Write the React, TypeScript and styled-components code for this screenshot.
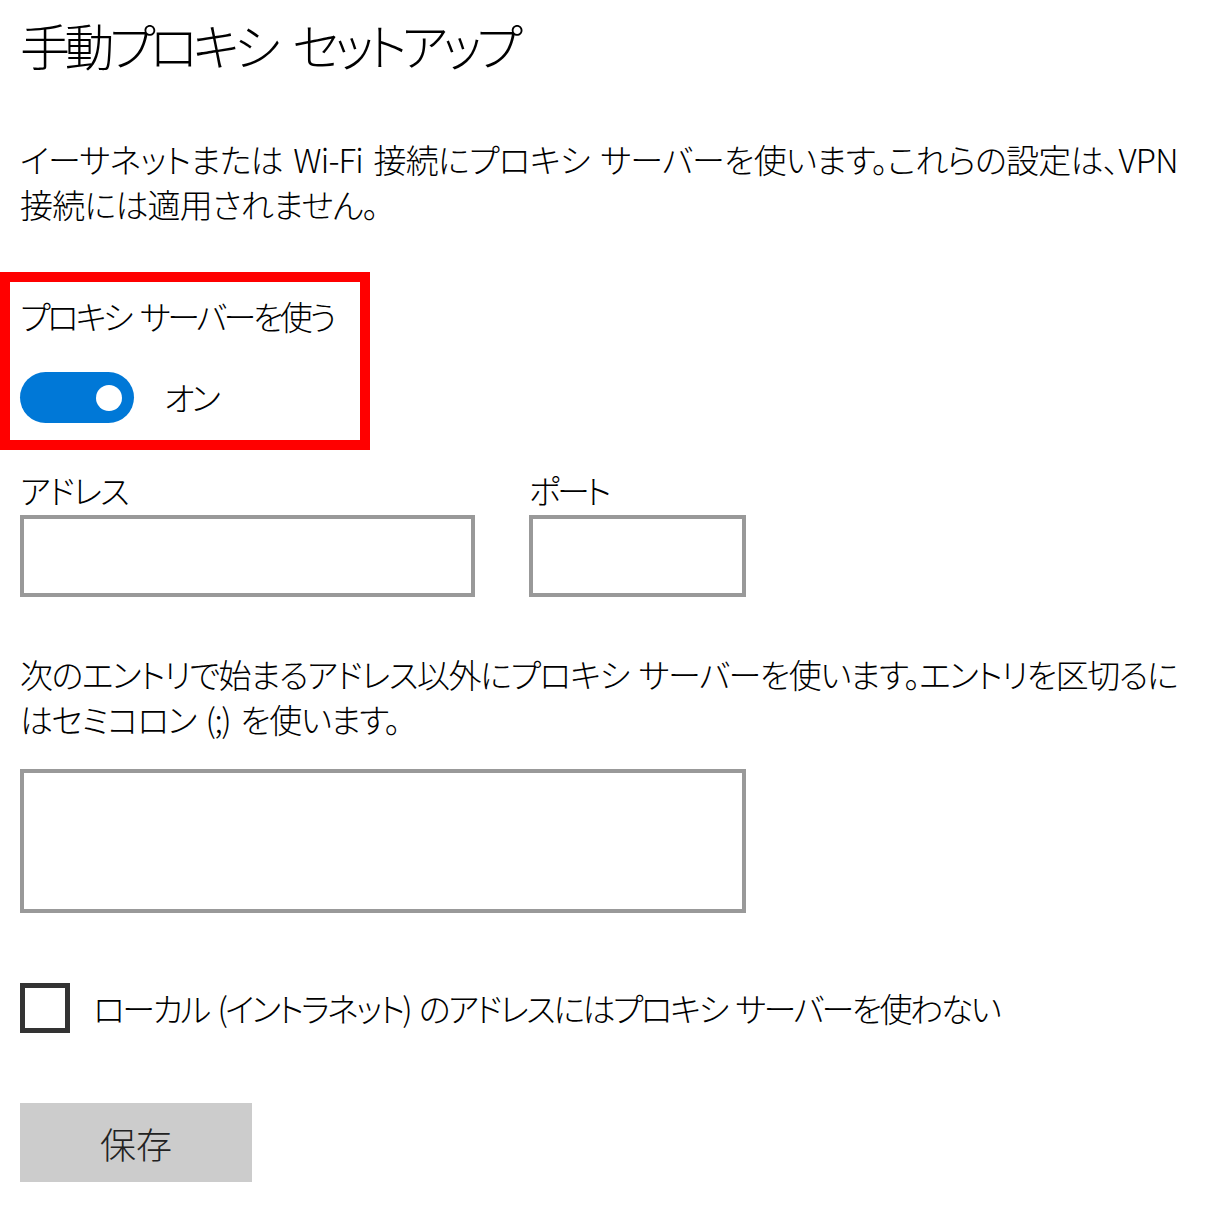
import React from "react";
import styled, { createGlobalStyle } from "styled-components";

const Global = createGlobalStyle`
  html, body { margin: 0; padding: 0; background: #fff; }
  body {
    font-family: "Noto Sans CJK JP", "Noto Sans", sans-serif;
    font-weight: 300;
    color: #000;
    font-feature-settings: "palt";
  }
  * { box-sizing: border-box; }
`;

const Page = styled.div`
  display: flex;
  flex-direction: column;
  align-items: flex-start;
  padding: 14px 0 0 20px;
  width: 1217px;
  height: 1208px;
`;

const Title = styled.h1`
  margin: 0;
  font-size: 50px;
  line-height: 60px;
  font-weight: 300;
  letter-spacing: -5.5px;
  word-spacing: 12px;
  white-space: nowrap;
`;

const Para = styled.p<{ $top: number; $ls: number }>`
  margin: ${(p) => p.$top}px 0 0;
  font-size: 33px;
  line-height: 45px;
  letter-spacing: ${(p) => p.$ls}px;
  word-spacing: 4px;
  white-space: nowrap;
`;

const Highlight = styled.section`
  margin: 45px 0 0 -20px;
  width: 370px;
  border: 10px solid #ff0000;
  padding: 12px 10px 17px;
  display: flex;
  flex-direction: column;
  gap: 33px;
`;

const Label = styled.div<{ $ls?: number }>`
  font-size: 33px;
  line-height: 45px;
  letter-spacing: ${(p) => p.$ls ?? -2}px;
  word-spacing: 6px;
  white-space: nowrap;
`;

const ToggleRow = styled.div`
  display: flex;
  align-items: center;
  gap: 30px;
  height: 51px;
`;

const Track = styled.div`
  width: 114px;
  height: 51px;
  border-radius: 26px;
  background: #0078d7;
  display: flex;
  align-items: center;
  justify-content: flex-end;
  padding-right: 12px;
`;

const Knob = styled.div`
  width: 26px;
  height: 26px;
  border-radius: 50%;
  background: #fff;
`;

const ToggleText = styled.span`
  font-size: 33px;
  line-height: 45px;
  letter-spacing: -3px;
`;

const FieldsRow = styled.div`
  display: flex;
  gap: 54px;
  margin-top: 18px;
`;

const Field = styled.div`
  display: flex;
  flex-direction: column;
  gap: 2px;
`;

const Input = styled.div<{ $w: number; $h: number }>`
  width: ${(p) => p.$w}px;
  height: ${(p) => p.$h}px;
  border: 4px solid #999;
  background: #fff;
`;

const TextArea = styled(Input)`
  margin-top: 27px;
`;

const CheckRow = styled.label`
  display: flex;
  align-items: center;
  gap: 23px;
  margin-top: 70px;
  height: 50px;
`;

const Box = styled.span`
  width: 50px;
  height: 50px;
  border: 5px solid #333;
  background: #fff;
`;

const CheckText = styled.span`
  font-size: 33px;
  line-height: 45px;
  letter-spacing: -2.6px;
  word-spacing: 4px;
  white-space: nowrap;
`;

const SaveButton = styled.button`
  margin-top: 70px;
  width: 232px;
  height: 79px;
  border: none;
  background: #cccccc;
  font-family: "Noto Sans CJK JP", sans-serif;
  font-weight: 300;
  font-size: 36px;
  color: #222;
  padding: 0;
`;

export default function App() {
  return (
    <>
      <Global />
      <Page>
        <Title>手動プロキシ セットアップ</Title>
        <Para $top={63} $ls={-0.8}>
          イーサネットまたは Wi-Fi 接続にプロキシ サーバーを使います。これらの設定は、VPN
          <br />
          接続には適用されません。
        </Para>
        <Highlight>
          <Label $ls={-3.5}>プロキシ サーバーを使う</Label>
          <ToggleRow>
            <Track>
              <Knob />
            </Track>
            <ToggleText>オン</ToggleText>
          </ToggleRow>
        </Highlight>
        <FieldsRow>
          <Field>
            <Label $ls={-1.9}>アドレス</Label>
            <Input $w={455} $h={82} />
          </Field>
          <Field>
            <Label $ls={-3.7}>ポート</Label>
            <Input $w={217} $h={82} />
          </Field>
        </FieldsRow>
        <Para $top={55} $ls={-1.45}>
          次のエントリで始まるアドレス以外にプロキシ サーバーを使います。エントリを区切るに
          <br />
          はセミコロン (;) を使います。
        </Para>
        <TextArea $w={726} $h={144} />
        <CheckRow>
          <Box />
          <CheckText>ローカル (イントラネット) のアドレスにはプロキシ サーバーを使わない</CheckText>
        </CheckRow>
        <SaveButton>保存</SaveButton>
      </Page>
    </>
  );
}
